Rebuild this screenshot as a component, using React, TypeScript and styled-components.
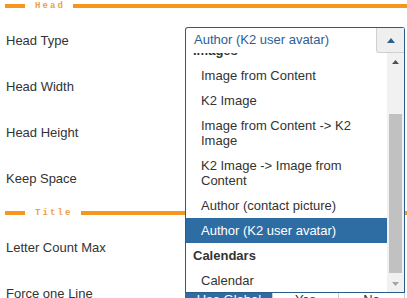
import styled, { createGlobalStyle } from 'styled-components';

const GlobalStyle = createGlobalStyle`
  html, body {
    margin: 0;
    padding: 0;
    background: #fff;
    overflow: hidden;
  }
  body {
    font-family: 'Liberation Sans', Arial, sans-serif;
    color: #333;
  }
`;

type Option = { label: string; group?: boolean; selected?: boolean };

const options: Option[] = [
  { label: 'Images', group: true },
  { label: 'Image from Content' },
  { label: 'K2 Image' },
  { label: 'Image from Content -> K2 Image' },
  { label: 'K2 Image -> Image from Content' },
  { label: 'Author (contact picture)' },
  { label: 'Author (K2 user avatar)', selected: true },
  { label: 'Calendars', group: true },
  { label: 'Calendar' },
];

const SectionTitle = ({ title }: { title: string }) => (
  <SectionHeader>
    <ShortBar />
    <Legend>{title}</Legend>
    <LongBar />
  </SectionHeader>
);

const ToggleGroup = ({ active }: { active: string }) => (
  <Toggles>
    {['Use Global', 'Yes', 'No'].map((label) => (
      <ToggleButton key={label} active={label === active} wide={label === 'Use Global'}>
        {label}
      </ToggleButton>
    ))}
  </Toggles>
);

const App = () => {
  return (
    <Page>
      <GlobalStyle />
      <SectionTitle title="Head" />
      <Row>
        <Label>Head Type</Label>
        <Control>
          <SelectWrap>
            <SelectBox>
              <SelectValue>Author (K2 user avatar)</SelectValue>
              <SelectArrow>
                <svg width="8" height="5" viewBox="0 0 8 5">
                  <path d="M0 5 L4 0 L8 5 Z" fill="#2d5f8f" />
                </svg>
              </SelectArrow>
            </SelectBox>
            <Dropdown>
              <Viewport>
                <OptionList>
                  {options.map((opt) => (
                    <OptionItem key={opt.label} group={!!opt.group} selected={!!opt.selected}>
                      {opt.label}
                    </OptionItem>
                  ))}
                </OptionList>
              </Viewport>
              <Scrollbar>
                <ScrollArrow>
                  <svg width="7" height="4" viewBox="0 0 7 4">
                    <path d="M0 4 L3.5 0 L7 4 Z" fill="#505050" />
                  </svg>
                </ScrollArrow>
                <Track>
                  <Thumb />
                </Track>
                <ScrollArrow>
                  <svg width="7" height="4" viewBox="0 0 7 4">
                    <path d="M0 0 L3.5 4 L7 0 Z" fill="#a3a3a3" />
                  </svg>
                </ScrollArrow>
              </Scrollbar>
            </Dropdown>
          </SelectWrap>
        </Control>
      </Row>
      <Row>
        <Label>Head Width</Label>
        <Control>
          <TextInput />
        </Control>
      </Row>
      <Row>
        <Label>Head Height</Label>
        <Control>
          <TextInput />
        </Control>
      </Row>
      <Row>
        <Label>Keep Space</Label>
        <Control>
          <ToggleGroup active="Use Global" />
        </Control>
      </Row>
      <SectionTitle title="Title" />
      <Row>
        <Label>Letter Count Max</Label>
        <Control>
          <TextInput />
        </Control>
      </Row>
      <Row>
        <Label>Force one Line</Label>
        <Control>
          <ToggleGroup active="Use Global" />
        </Control>
      </Row>
    </Page>
  );
};

const Page = styled.div`
  width: 407px;
  height: 298px;
  overflow: hidden;
  padding-right: 2px;
  box-sizing: border-box;
`;

const SectionHeader = styled.div`
  display: flex;
  align-items: center;
  height: 12px;
  margin: 6px -2px 5px 0;
  padding-left: 5px;

  &:first-child {
    margin-top: 0;
  }
`;

const ShortBar = styled.div`
  width: 20px;
  height: 4px;
  background: #f5961e;
`;

const LongBar = styled.div`
  flex: 1;
  height: 4px;
  background: #f5961e;
`;

const Legend = styled.span`
  font-family: 'Liberation Mono', 'Courier New', monospace;
  font-size: 9px;
  font-weight: bold;
  letter-spacing: 2.1px;
  color: #eba14c;
  margin: 0 8px 0 10px;
  line-height: 12px;
`;

const Row = styled.div`
  display: flex;
  align-items: center;
  height: 46px;
`;

const Label = styled.div`
  width: 185px;
  padding-left: 6px;
  box-sizing: border-box;
  font-size: 13px;
  color: #333;
`;

const Control = styled.div`
  flex: 1;
`;

const SelectWrap = styled.div`
  position: relative;
  z-index: 5;
`;

const SelectBox = styled.div`
  display: flex;
  align-items: stretch;
  height: 26px;
  box-sizing: border-box;
  border: 1px solid #2c5b87;
  border-bottom: none;
  border-radius: 3px 3px 0 0;
  background: #fff;
`;

const SelectValue = styled.div`
  flex: 1;
  padding-left: 8px;
  font-size: 13px;
  line-height: 24px;
  color: #2a6096;
`;

const SelectArrow = styled.div`
  width: 27px;
  display: flex;
  align-items: center;
  justify-content: center;
  background: #efefef;
  border-left: 1px solid #cfcfcf;
  border-bottom: 1px solid #cfcfcf;
  border-bottom-left-radius: 3px;
`;

const Dropdown = styled.div`
  position: absolute;
  top: 26px;
  left: 0;
  right: 0;
  height: 240px;
  display: flex;
  box-sizing: border-box;
  border: 1px solid #2c5b87;
  border-top: none;
  background: #fff;
`;

const Viewport = styled.div`
  flex: 1;
  overflow: hidden;
`;

const OptionList = styled.ul`
  list-style: none;
  margin: -15px 0 0;
  padding: 0;
`;

const OptionItem = styled.li<{ group: boolean; selected: boolean }>`
  padding: 5px 20px 5px ${(p) => (p.group ? '7px' : '15px')};
  font-size: 13px;
  line-height: 15px;
  font-weight: ${(p) => (p.group ? 'bold' : 'normal')};
  color: ${(p) => (p.selected ? '#fff' : '#333')};
  background: ${(p) => (p.selected ? '#2e6da4' : 'transparent')};
`;

const Scrollbar = styled.div`
  width: 17px;
  display: flex;
  flex-direction: column;
  background: #f1f1f1;
`;

const ScrollArrow = styled.div`
  height: 17px;
  display: flex;
  align-items: center;
  justify-content: center;
`;

const Track = styled.div`
  flex: 1;
  padding: 44px 2px 2px;
  display: flex;
`;

const Thumb = styled.div`
  flex: 1;
  background: #c1c1c1;
`;

const TextInput = styled.div`
  height: 26px;
  box-sizing: border-box;
  border: 1px solid #ccc;
  border-radius: 3px;
`;

const Toggles = styled.div`
  display: flex;
  height: 26px;
  margin-top: 12px;
`;

const ToggleButton = styled.div<{ active: boolean; wide: boolean }>`
  flex: ${(p) => (p.wide ? '0 0 88px' : '1')};
  display: flex;
  align-items: center;
  justify-content: center;
  font-size: 13px;
  box-sizing: border-box;
  border: 1px solid ${(p) => (p.active ? '#2e6da4' : '#ccc')};
  margin-left: -1px;
  background: ${(p) => (p.active ? '#2e6da4' : '#fff')};
  color: ${(p) => (p.active ? '#fff' : '#333')};

  &:first-child {
    margin-left: 0;
    border-radius: 3px 0 0 3px;
  }
  &:last-child {
    border-radius: 0 3px 3px 0;
  }
`;

export default App;
